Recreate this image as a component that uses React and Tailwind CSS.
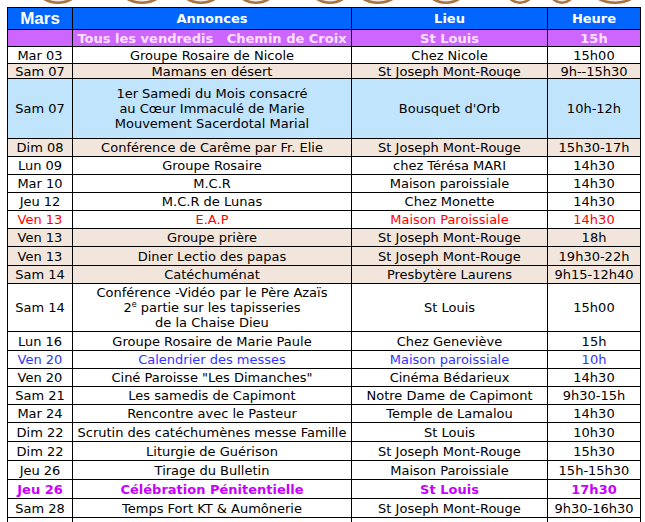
const rows = [
  { d: 'Mar 03', a: 'Groupe Rosaire de Nicole', l: 'Chez Nicole', h: '15h00', hh: 'h-[17px]' },
  { d: 'Sam 07', a: 'Mamans en désert', l: 'St Joseph Mont-Rouge', h: '9h--15h30', bg: 'bg-[#f2e6dc]', hh: 'h-[15px]' },
  {
    d: 'Sam 07',
    a: ['1er Samedi du Mois consacré', 'au Cœur Immaculé de Marie', 'Mouvement Sacerdotal Marial'],
    l: "Bousquet d'Orb",
    h: '10h-12h',
    bg: 'bg-[#bfe4fc]',
    hh: 'h-[60px]',
  },
  { d: 'Dim 08', a: 'Conférence de Carême par Fr. Elie', l: 'St Joseph Mont-Rouge', h: '15h30-17h', bg: 'bg-[#f2e6dc]', hh: 'h-[18px]' },
  { d: 'Lun 09', a: 'Groupe Rosaire', l: 'chez Térésa MARI', h: '14h30', hh: 'h-[18px]' },
  { d: 'Mar 10', a: 'M.C.R', l: 'Maison paroissiale', h: '14h30', hh: 'h-[18px]' },
  { d: 'Jeu 12', a: 'M.C.R de Lunas', l: 'Chez Monette', h: '14h30', hh: 'h-[18px]' },
  { d: 'Ven 13', a: 'E.A.P', l: 'Maison Paroissiale', h: '14h30', color: 'text-[#ff0000]', hh: 'h-[18px]' },
  { d: 'Ven 13', a: 'Groupe prière', l: 'St Joseph Mont-Rouge', h: '18h', bg: 'bg-[#f2e6dc]', hh: 'h-[18px]' },
  { d: 'Ven 13', a: 'Diner Lectio des papas', l: 'St Joseph Mont-Rouge', h: '19h30-22h', bg: 'bg-[#f2e6dc]', hh: 'h-[19px]' },
  { d: 'Sam 14', a: 'Catéchuménat', l: 'Presbytère Laurens', h: '9h15-12h40', bg: 'bg-[#f2e6dc]', hh: 'h-[18px]' },
  { d: 'Sam 14', a: 'conf', l: 'St Louis', h: '15h00', hh: 'h-[48px]' },
  { d: 'Lun 16', a: 'Groupe Rosaire de Marie Paule', l: 'Chez Geneviève', h: '15h', hh: 'h-[19px]' },
  { d: 'Ven 20', a: 'Calendrier des messes', l: 'Maison paroissiale', h: '10h', color: 'text-[#3333ff]', hh: 'h-[18px]' },
  { d: 'Ven 20', a: 'Ciné Paroisse "Les Dimanches"', l: 'Cinéma Bédarieux', h: '14h30', hh: 'h-[18px]' },
  { d: 'Sam 21', a: 'Les samedis de Capimont', l: 'Notre Dame de Capimont', h: '9h30-15h', hh: 'h-[18px]' },
  { d: 'Mar 24', a: 'Rencontre avec le Pasteur', l: 'Temple de Lamalou', h: '14h30', hh: 'h-[18px]' },
  { d: 'Dim 22', a: 'Scrutin des catéchumènes messe Famille', l: 'St Louis', h: '10h30', hh: 'h-[19px]' },
  { d: 'Dim 22', a: 'Liturgie de Guérison', l: 'St Joseph Mont-Rouge', h: '15h30', hh: 'h-[19px]' },
  { d: 'Jeu 26', a: 'Tirage du Bulletin', l: 'Maison Paroissiale', h: '15h-15h30', hh: 'h-[19px]' },
  { d: 'Jeu 26', a: 'Célébration Pénitentielle', l: 'St Louis', h: '17h30', color: 'text-[#cc00ff] font-bold', hh: 'h-[19px]' },
  { d: 'Sam 28', a: 'Temps Fort KT & Aumônerie', l: 'St Joseph Mont-Rouge', h: '9h30-16h30', hh: 'h-[19px]' },
  { d: '', a: '', l: '', h: '', hh: 'h-[19px]' },
];

const cols = ['w-[66px] border-l', 'w-[279px]', 'w-[196px]', 'w-[93px]'];

const Cell = ({ i, children }) => (
  <div className={`${cols[i]} shrink-0 border-r border-black flex flex-col items-center justify-center text-center`}>
    {children}
  </div>
);

const Annonce = ({ a }) => {
  if (a === 'conf') {
    return (
      <div className="leading-[15px]">
        <div>Conférence -Vidéo par le Père Azaïs</div>
        <div className="whitespace-nowrap">
          2<span className="text-[8px] leading-none relative -top-[5px]">e</span> partie sur les tapisseries
        </div>
        <div>de la Chaise Dieu</div>
      </div>
    );
  }
  if (Array.isArray(a)) {
    return (
      <div className="leading-[15px]">
        {a.map((t) => (
          <div key={t}>{t}</div>
        ))}
      </div>
    );
  }
  return <span className="whitespace-nowrap">{a}</span>;
};

// brown oval edges peeking at the top of the page
const TopDeco = () => {
  const ovals = [
    [58, 18], [142, 19], [201, 18], [256, 17], [330, 17], [378, 19], [446, 17], [520, 13], [562, 12], [615, 21],
  ];
  return (
    <svg width="645" height="7" className="block">
      {ovals.map(([cx, rx]) => (
        <g key={cx}>
          <ellipse cx={cx} cy={-6} rx={rx} ry={10} fill="#a8733f" />
          <ellipse cx={cx} cy={-8} rx={rx - 2} ry={9.5} fill="#f1ebe4" />
        </g>
      ))}
    </svg>
  );
};

export default function App() {
  return (
    <div className="w-[645px] h-[522px] overflow-hidden bg-white font-['DejaVu_Sans',Verdana,sans-serif] text-[13px] leading-none text-black">
      <TopDeco />
      <div className="ml-[7px] w-[634px] border-t border-black">
        {/* header */}
        <div className="flex h-[22px] border-b border-black bg-[#0066ff] text-white font-bold">
          <Cell i={0}>
            <span className="font-['Liberation_Sans',Arial,sans-serif] text-[17px]">Mars</span>
          </Cell>
          <Cell i={1}>Annonces</Cell>
          <Cell i={2}>Lieu</Cell>
          <Cell i={3}>Heure</Cell>
        </div>

        {/* tous les vendredis */}
        <div className="flex h-[17px] border-b border-black bg-[#cc66ff] text-[#ffe0ff] font-bold">
          <Cell i={0}></Cell>
          <Cell i={1}>
            <span className="whitespace-pre">Tous les vendredis   Chemin de Croix</span>
          </Cell>
          <Cell i={2}>St Louis</Cell>
          <Cell i={3}>15h</Cell>
        </div>

        {rows.map((r, idx) => (
          <div key={idx} className={`flex ${r.hh} border-b border-black ${r.bg || 'bg-white'} ${r.color || ''}`}>
            <Cell i={0}>{r.d}</Cell>
            <Cell i={1}>
              <Annonce a={r.a} />
            </Cell>
            <Cell i={2}>{r.l}</Cell>
            <Cell i={3}>{r.h}</Cell>
          </div>
        ))}
      </div>
    </div>
  );
}
